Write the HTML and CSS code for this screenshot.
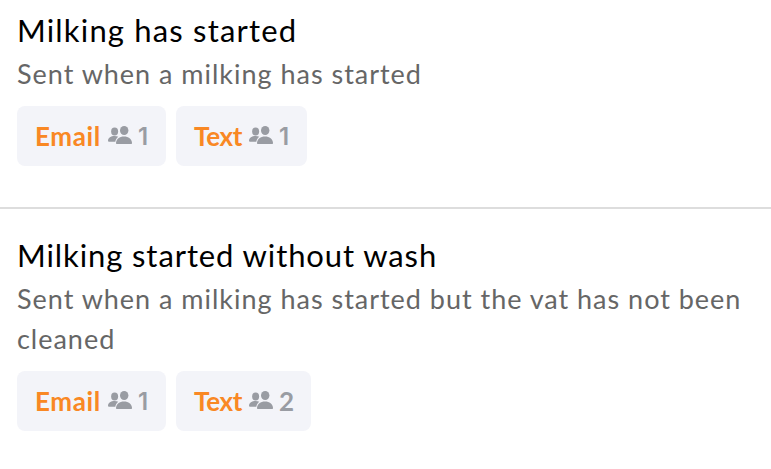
FILE: index.html
```html
<!DOCTYPE html>
<html lang="en">
  <head>
    <meta charset="utf-8" />
    <meta name="viewport" content="width=device-width, initial-scale=1" />
    <title>Notifications</title>
    <link rel="stylesheet" href="styles.css">
  </head>
  <body>
    <!-- the people icon is shared by all the chips -->
    <svg class="sprite" width="0" height="0">
      <symbol id="people" viewBox="0 0 24 18">
        <ellipse cx="6.600" cy="5.500" rx="3.500" ry="3.900" />
        <path d="M0 14.800c0-3 3-4.900 6.500-4.900 1.600 0 2.800.3 3.800.8C8.600 12 7.700 13.400 7.300 15.700H1c-.7 0-1-.3-1-.9z" />
        <ellipse cx="16.200" cy="4.500" rx="4.200" ry="4.500" />
        <path d="M8 17c0-4 3.600-6.600 8-6.600s8 2.600 8 6.600c0 .7-.3 1-1 1H9c-.7 0-1-.3-1-1z" />
      </symbol>
    </svg>

    <div class="notification">
      <h2 class="title">Milking has started</h2>
      <p class="description">Sent when a milking has started</p>
      <div class="chips">
        <div class="chip">
          <span class="channel email">Email</span>
          <svg class="icon"><use href="#people" /></svg>
          <span class="count one">1</span>
        </div>
        <div class="chip">
          <span class="channel text">Text</span>
          <svg class="icon"><use href="#people" /></svg>
          <span class="count one">1</span>
        </div>
      </div>
    </div>

    <div class="notification">
      <h2 class="title long">Milking started without wash</h2>
      <p class="description">Sent when a milking has started but the vat has not been cleaned</p>
      <div class="chips">
        <div class="chip">
          <span class="channel email">Email</span>
          <svg class="icon"><use href="#people" /></svg>
          <span class="count one">1</span>
        </div>
        <div class="chip">
          <span class="channel text">Text</span>
          <svg class="icon"><use href="#people" /></svg>
          <span class="count">2</span>
        </div>
      </div>
    </div>
  </body>
</html>
```
FILE: styles.css
```css
body {
    margin: 0;
    background-color: #fff;
    font-family: Lato, "Liberation Sans", sans-serif;
}

.sprite {
    display: block;
}

.notification {
    height: 191px;
    padding: 16px 17px 0;
    border-bottom: 2px solid #ddd;
}

.notification + .notification {
    height: 228px;
    padding-top: 32px;
    border-bottom: 0;
}

/* tight line box, the descenders get cut off */
.title {
    height: 32px;
    margin: 0;
    overflow: hidden;
    color: #000;
    font-size: 31px;
    font-weight: 400;
    line-height: 29px;
    letter-spacing: 1.18px;
    white-space: nowrap;
}

.long {
    letter-spacing: 0.9px;
}

.description {
    margin: 6px 0 12px;
    color: #666;
    font-size: 27px;
    line-height: 40px;
    letter-spacing: 0.98px;
}

.chips {
    display: flex;
    gap: 10px;
}

.chip {
    display: flex;
    align-items: center;
    height: 60px;
    padding: 0 18px;
    border-radius: 8px;
    background-color: #f3f4f9;
    font-size: 26px;
    font-weight: 700;
    line-height: 60px;
}

.channel {
    color: #f98824;
}

.email {
    width: 73px;
    letter-spacing: 0.6px;
}

.text {
    width: 55px;
    letter-spacing: -0.3px;
}

.icon {
    width: 24px;
    height: 18px;
    margin-bottom: 2px;
    fill: #999ca3;
}

.count {
    width: 14px;
    margin-left: 6px;
    color: #999ca3;
}

/* the 1 is narrower than the other digits */
.one {
    width: 10px;
    margin-left: 6px;
    padding-top: 1px;
    font-family: Inter, sans-serif;
    font-size: 24px;
    font-weight: 600;
    letter-spacing: -1px;
}
```
